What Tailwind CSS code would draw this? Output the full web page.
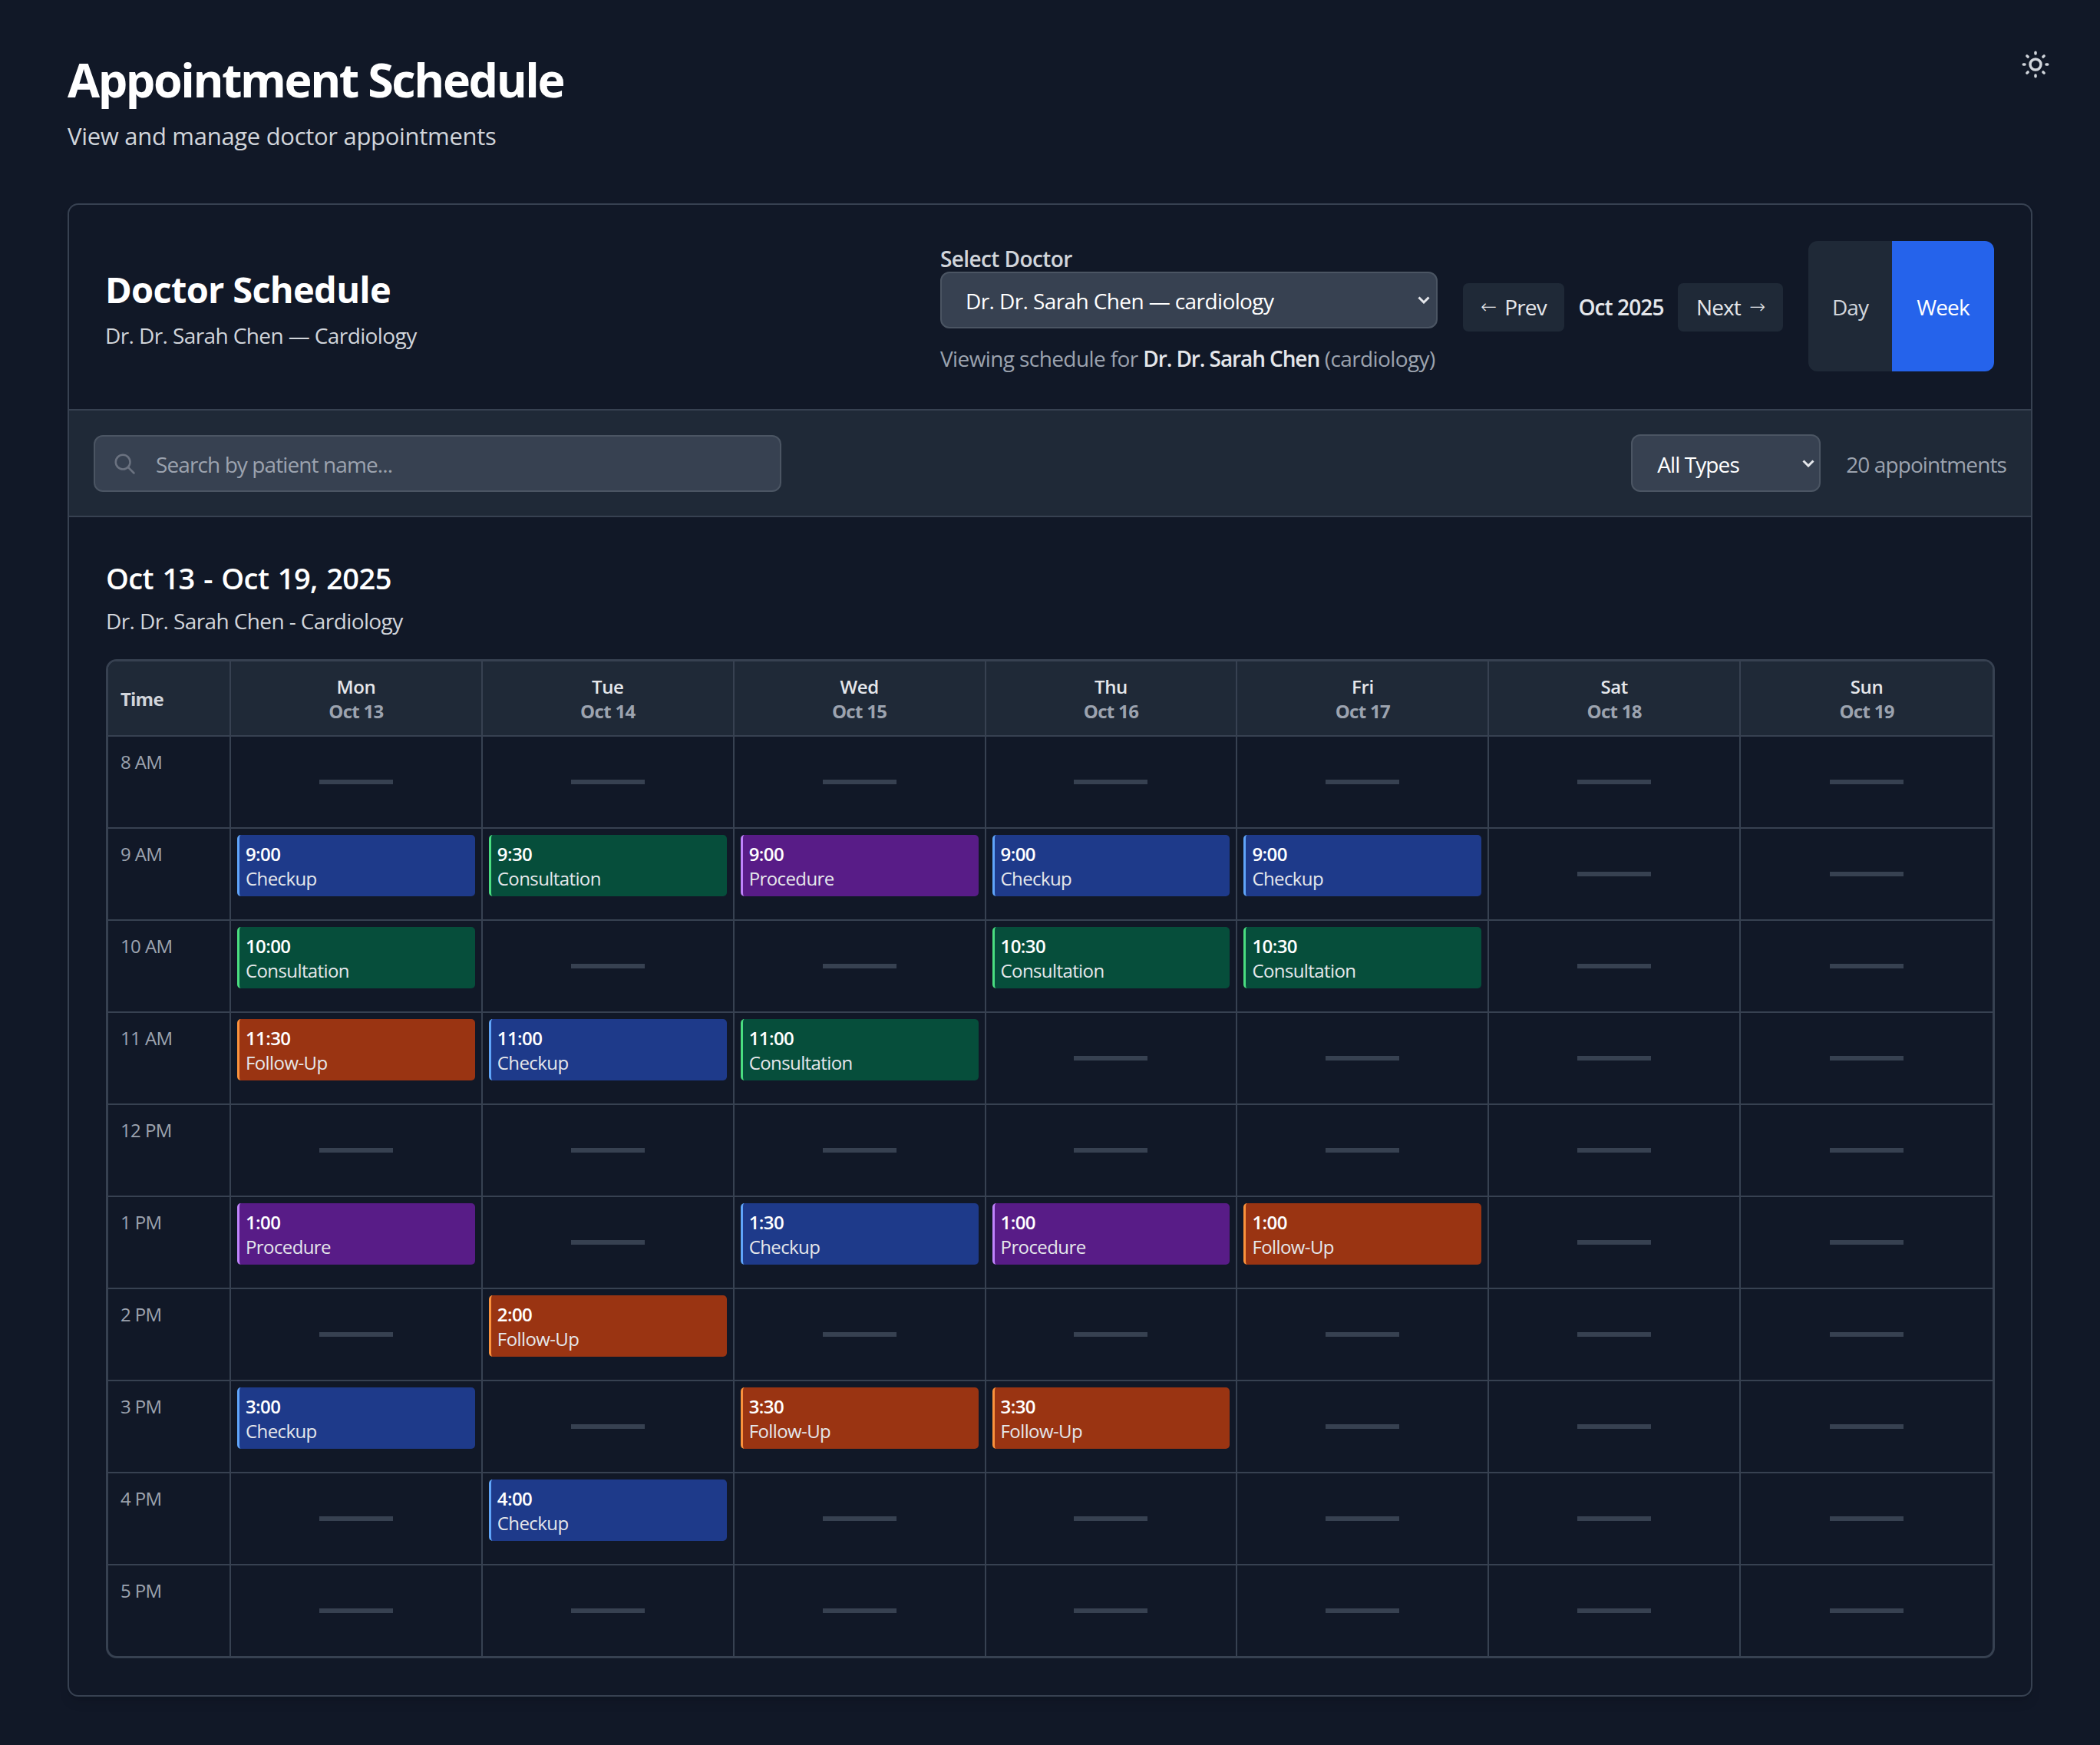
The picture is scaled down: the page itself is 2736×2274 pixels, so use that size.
<!DOCTYPE html>
<html lang="en">
<head>
    <meta charset="UTF-8">
    <meta name="viewport" content="width=device-width, initial-scale=1.0">
    <title>Appointment Schedule</title>
    <script src="https://cdn.jsdelivr.net/npm/@tailwindcss/browser@4"></script>
</head>
<body class="bg-[#111827] font-['Open_Sans',sans-serif] text-white">
    <div class="relative min-h-[2274px] px-[88px] pt-[69px]">
        <!-- Theme toggle -->
        <button class="absolute left-[2631px] top-[63px] text-[#d1d5db]">
            <svg class="w-[42px] h-[42px]" fill="none" stroke="currentColor" stroke-width="2" stroke-linecap="round" stroke-linejoin="round" viewBox="0 0 24 24">
                <path d="M12 3v1m0 16v1m9-9h-1M4 12H3m15.364 6.364l-.707-.707M6.343 6.343l-.707-.707m12.728 0l-.707.707M6.343 17.657l-.707.707M16 12a4 4 0 11-8 0 4 4 0 018 0z"/>
            </svg>
        </button>

        <!-- Page title -->
        <h1 class="text-[61px] leading-[70px] font-bold tracking-[-2.450px]">Appointment Schedule</h1>
        <p class="mt-[16px] text-[31px] leading-[44px] text-[#d1d5db] tracking-[-0.300px] mb-[66px]">View and manage doctor appointments</p>

        <!-- Card -->
        <div class="border-2 border-[#374151] rounded-[14px] shadow-lg bg-[#111827]">
            <div class="flex items-center justify-between pl-[47px] pr-[48px] pt-[47px] pb-[49px]">
                <div class="pt-[7px]">
                    <h2 class="text-[47px] leading-[56px] font-bold tracking-[-0.700px]">Doctor Schedule</h2>
                    <p class="mt-[12px] text-[28px] leading-[40px] text-[#d1d5db] tracking-[-0.600px]">Dr. Dr. Sarah Chen — Cardiology</p>
                </div>
                <div class="flex items-center gap-[33px] h-[170px]">
                    <div class="w-[648px]">
                        <label class="block pt-[3px] h-[40px] text-[28px] leading-[40px] font-semibold text-[#d1d5db] tracking-[-0.600px]">Select Doctor</label>
                        <div class="relative">
                            <select class="appearance-none w-full h-[74px] pl-[31px] pt-[2px] rounded-[12px] bg-[#374151] border-2 border-[#4b5563] text-[28px] text-white tracking-[-0.600px]">
                                <option>Dr. Dr. Sarah Chen — cardiology</option>
                            </select>
                            <svg class="absolute right-[10px] top-[32px] w-[16px] h-[10px]" fill="none" stroke="#e5e7eb" stroke-width="3" viewBox="0 0 16 10"><path d="M1.500 1.500L8 8l6.500-6.500"/></svg>
                        </div>
                        <p class="mt-[22px] text-[28px] leading-[34px] text-[#9ca3af] tracking-[-0.600px] whitespace-nowrap">Viewing schedule for <span class="font-semibold text-[#e5e7eb] tracking-[-1.100px]">Dr. Dr. Sarah Chen</span> (cardiology)</p>
                    </div>
                    <div class="flex items-center mt-[2px]">
                        <button class="flex items-center justify-center gap-[11px] h-[63px] w-[132px] rounded-[7px] bg-[#1f2937] text-[28px] text-[#e5e7eb] tracking-[-0.900px]"><span class="font-['DejaVu_Sans',sans-serif] text-[25px] font-light">←</span>Prev</button>
                        <span class="w-[148px] text-center text-[28px] font-semibold text-[#e5e7eb] tracking-[-0.900px]">Oct 2025</span>
                        <button class="flex items-center justify-center gap-[11px] h-[63px] w-[137px] rounded-[7px] bg-[#1f2937] text-[28px] text-[#e5e7eb] tracking-[-0.900px]">Next<span class="font-['DejaVu_Sans',sans-serif] text-[25px] font-light">→</span></button>
                    </div>
                    <div class="flex self-stretch rounded-[12px] overflow-hidden">
                        <button class="w-[109px] pt-[2px] bg-[#1f2937] text-[28px] text-[#d1d5db] tracking-[-0.900px]">Day</button>
                        <button class="w-[133px] pt-[2px] bg-[#2563eb] text-[28px] text-white tracking-[-0.900px]">Week</button>
                    </div>
                </div>
            </div>

            <!-- Filters -->
            <div class="flex items-center justify-between h-[141px] px-[32px] bg-[#1f2937] border-y-2 border-[#374151]">
                <div class="relative w-[896px]">
                    <svg class="absolute left-[25px] top-[22px] w-[30px] h-[30px] text-[#6b7280]" fill="none" stroke="currentColor" stroke-width="2" stroke-linecap="round" viewBox="0 0 24 24"><circle cx="10.500" cy="10.500" r="7.500"/><path d="M16 16l6 6"/></svg>
                    <input type="text" placeholder="Search by patient name..." class="w-full h-[74px] pl-[79px] pt-[2px] rounded-[12px] bg-[#374151] border-2 border-[#4b5563] text-[28px] text-white placeholder:text-[#9ca3af] tracking-[-0.900px]">
                </div>
                <div class="flex items-center gap-[33px]">
                    <div class="relative w-[247px]">
                        <select class="appearance-none w-full h-[75px] pl-[32px] pt-[2px] rounded-[12px] bg-[#374151] border-2 border-[#4b5563] text-[28px] text-white tracking-[-0.900px]">
                            <option>All Types</option>
                        </select>
                        <svg class="absolute right-[8px] top-[33px] w-[16px] h-[10px]" fill="none" stroke="#e5e7eb" stroke-width="3" viewBox="0 0 16 10"><path d="M1.500 1.500L8 8l6.500-6.500"/></svg>
                    </div>
                    <span class="pt-[2px] text-[28px] text-[#9ca3af] tracking-[-0.900px]">20 appointments</span>
                </div>
            </div>

            <!-- Week view -->
            <div class="pl-[48px] pr-[47px] pt-[54px] pb-[48px]">
                <h3 class="text-[38px] leading-[50px] font-semibold tracking-[-0.600px] [word-spacing:2.200px]">Oct 13 - Oct 19, 2025</h3>
                <p class="mt-[11px] mb-[30px] text-[28px] leading-[40px] text-[#d1d5db] tracking-[-0.600px]">Dr. Dr. Sarah Chen - Cardiology</p>
                <div id="grid" class="grid grid-cols-[160px_repeat(7,1fr)] border-[3px] border-[#374151] rounded-[14px] overflow-hidden"></div>
            </div>
        </div>
    </div>

    <script>
        const days = [['Mon', 'Oct 13'], ['Tue', 'Oct 14'], ['Wed', 'Oct 15'], ['Thu', 'Oct 16'], ['Fri', 'Oct 17'], ['Sat', 'Oct 18'], ['Sun', 'Oct 19']];
        const hours = ['8 AM', '9 AM', '10 AM', '11 AM', '12 PM', '1 PM', '2 PM', '3 PM', '4 PM', '5 PM'];
        const types = {
            Checkup: 'bg-[#1e3a8a] border-[#60a5fa]',
            Consultation: 'bg-[#064e3b] border-[#4ade80]',
            Procedure: 'bg-[#581c87] border-[#c084fc]',
            'Follow-Up': 'bg-[#9a3412] border-[#fb923c]'
        };
        // row index -> day index -> [time, type]
        const appts = {
            1: { 0: ['9:00', 'Checkup'], 1: ['9:30', 'Consultation'], 2: ['9:00', 'Procedure'], 3: ['9:00', 'Checkup'], 4: ['9:00', 'Checkup'] },
            2: { 0: ['10:00', 'Consultation'], 3: ['10:30', 'Consultation'], 4: ['10:30', 'Consultation'] },
            3: { 0: ['11:30', 'Follow-Up'], 1: ['11:00', 'Checkup'], 2: ['11:00', 'Consultation'] },
            5: { 0: ['1:00', 'Procedure'], 2: ['1:30', 'Checkup'], 3: ['1:00', 'Procedure'], 4: ['1:00', 'Follow-Up'] },
            6: { 1: ['2:00', 'Follow-Up'] },
            7: { 0: ['3:00', 'Checkup'], 2: ['3:30', 'Follow-Up'], 3: ['3:30', 'Follow-Up'] },
            8: { 1: ['4:00', 'Checkup'] }
        };

        let html = '<div class="h-[98px] pt-[2px] flex items-center pl-[16px] bg-[#1f2937] border-r-2 border-b-2 border-[#374151] text-[24px] font-bold text-[#d1d5db] tracking-[-0.800px]">Time</div>';
        days.forEach(function(d, i) {
            const edge = i === 6 ? 'border-b-2' : 'border-r-2 border-b-2';
            html += '<div class="h-[98px] pt-[2px] flex flex-col items-center justify-center bg-[#1f2937] border-[#374151] text-[24px] leading-[32px] font-semibold tracking-[-0.400px] ' + edge + '">'
                + '<span class="text-[#e5e7eb]">' + d[0] + '</span><span class="font-bold text-[#9ca3af] tracking-[-0.700px]">' + d[1] + '</span></div>';
        });
        hours.forEach(function(h, r) {
            const last = r === hours.length - 1;
            const height = last ? 'h-[118px]' : 'h-[120px] border-b-2';
            html += '<div class="border-r-2 border-[#374151] pl-[16px] pt-[16px] text-[24px] leading-[34px] text-[#9ca3af] tracking-[-0.600px] ' + height + '">' + h + '</div>';
            days.forEach(function(d, i) {
                const a = appts[r] && appts[r][i];
                const edge = i === 6 ? '' : 'border-r-2';
                html += '<div class="p-[8px] border-[#374151] ' + height + ' ' + edge + '">';
                if (a) {
                    html += '<div class="h-[80px] rounded-[5px] border-l-[3px] pl-[8px] pt-[9px] text-[24px] leading-[32px] tracking-[-0.600px] ' + types[a[1]] + '">'
                        + '<div class="font-semibold text-white">' + a[0] + '</div><div class="text-[#e5e7eb]">' + a[1] + '</div></div>';
                } else {
                    html += '<div class="h-full flex items-center justify-center"><div class="w-[96px] h-[6px] bg-[#374151]"></div></div>';
                }
                html += '</div>';
            });
        });
        document.getElementById('grid').innerHTML = html;
    </script>
</body>
</html>
